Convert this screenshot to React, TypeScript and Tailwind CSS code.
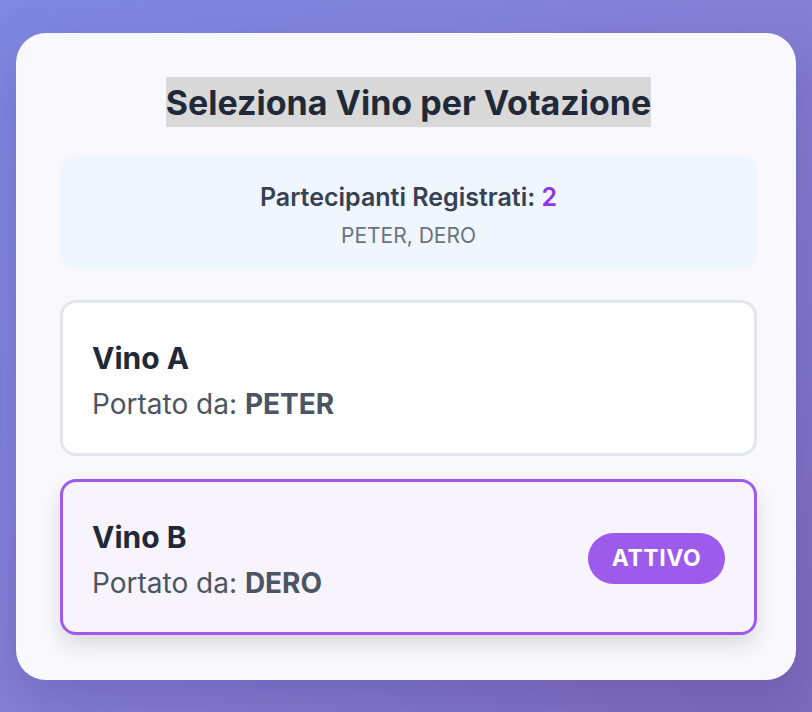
import React from "react";

const font = { fontFamily: "Inter, 'Noto Sans', 'Liberation Sans', sans-serif" };

function WineCard({ name, by, active }: { name: string; by: string; active?: boolean }) {
  return (
    <div
      className={
        "flex items-center justify-between rounded-2xl border-[3px] pl-[29px] pr-[29px] pt-[37px] pb-[32px] " +
        (active
          ? "border-[#a05aeb] bg-[#f7f4fe] shadow-[0_10px_20px_rgba(0,0,0,0.12)]"
          : "border-[#e5e6eb] bg-white")
      }
    >
      <div className="flex flex-col">
        <div className="text-[30px] leading-[36px] font-bold text-[#1f2937]">{name}</div>
        <div className="mt-[11px] text-[28px] leading-[34px] text-[#4b5563]">
          Portato da: <span className="font-bold">{by}</span>
        </div>
      </div>
      {active && (
        <div className="mb-[3px] flex h-[51px] w-[137px] items-center justify-center rounded-full bg-[#9d5bec] text-[23px] font-bold tracking-[0.5px] text-white">
          ATTIVO
        </div>
      )}
    </div>
  );
}

export default function App() {
  return (
    <div
      style={font}
      className="min-h-[712px] w-full bg-[linear-gradient(135deg,#7f89e2_0%,#8680d6_50%,#7d6cbc_100%)] pt-[33px] pl-[16px] pr-[16px]"
    >
      <div className="w-[780px] rounded-[30px] bg-[#f8f8fd] pt-[44px] pb-[45px] pl-[44px] pr-[39px] shadow-[0_20px_50px_rgba(60,40,120,0.25)]">
        <div className="flex justify-center">
          <h1 className="flex h-[50px] items-center bg-[#d9d9d9] text-[34px] font-bold text-[#1f2937]">
            Seleziona Vino per Votazione
          </h1>
        </div>
        <div className="mt-[29px] flex flex-col items-center rounded-2xl bg-[#eff6fe] pt-[27px] pb-[22px]">
          <div className="text-[25px] leading-[28px] font-semibold text-[#374151]">
            Partecipanti Registrati: <span className="text-[#9333ea]">2</span>
          </div>
          <div className="mt-[13px] text-[21px] leading-[24px] text-[#6b7280]">PETER, DERO</div>
        </div>
        <div className="mt-[30px] flex flex-col gap-[23px]">
          <WineCard name="Vino A" by="PETER" />
          <WineCard name="Vino B" by="DERO" active />
        </div>
      </div>
    </div>
  );
}
